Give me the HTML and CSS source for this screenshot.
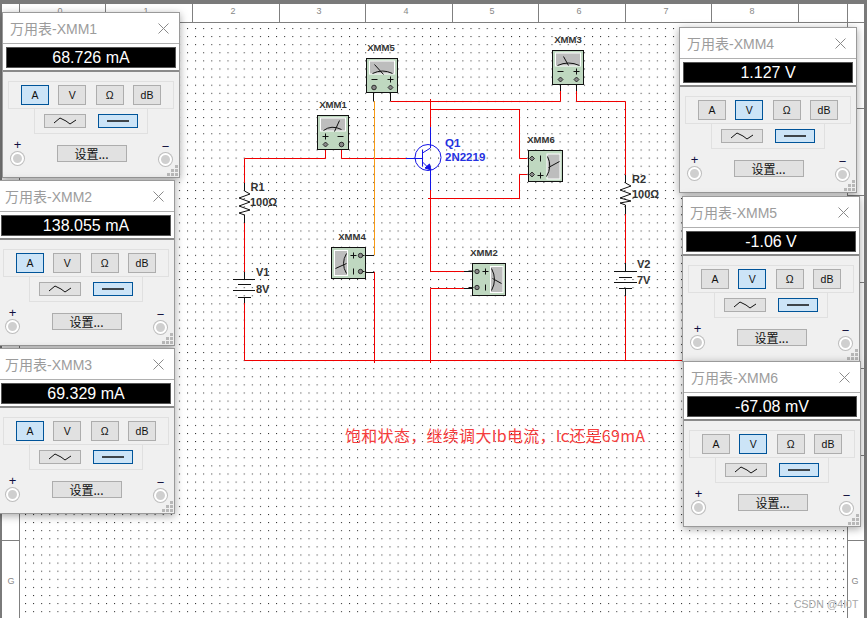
FILE: index.html
```html
<!DOCTYPE html>
<html lang="zh-CN">
<head>
<meta charset="utf-8">
<title>万用表</title>
<link rel="stylesheet" href="styles.css">
</head>
<body>
<main class="stage">
<svg class="sheet" width="867" height="618" viewBox="0 0 867 618" xmlns="http://www.w3.org/2000/svg">
  <defs>
    <pattern id="grid" patternUnits="userSpaceOnUse" x="0.7" y="3.7" width="8.1" height="8.1">
      <rect width="1" height="1" fill="#222"/>
    </pattern>
  </defs>
  <rect x="19" y="22" width="828" height="596" fill="url(#grid)"/>
  <rect x="2" y="4" width="17" height="614" fill="url(#grid)" opacity="0"/>
  <!-- ruler -->
  <g class="ruler">
    <path d="M0 22.5H867M19.5 4V618M847.5 4V618M105.5 4V22M192.5 4V22M279.5 4V22M365.5 4V22M452.5 4V22M538.5 4V22M625.5 4V22M711.5 4V22M798.5 4V22M847 108.5H867M847 195.5H867M847 282.5H867M847 368.5H867M847 455.5H867M847 540.5H867M2 540.5H19M2 455.5H19M2 368.5H19"/>
  </g>
  <rect class="edge" x="0" y="0" width="867" height="4"/>
  <rect class="edge" x="0" y="0" width="2" height="618"/>
  <rect class="edge" x="864" y="0" width="3" height="618"/>
  <text class="rulerText" x="60" y="14">0</text>
  <text class="rulerText" x="146" y="14">1</text>
  <text class="rulerText" x="233" y="14">2</text>
  <text class="rulerText" x="319" y="14">3</text>
  <text class="rulerText" x="406" y="14">4</text>
  <text class="rulerText" x="492" y="14">5</text>
  <text class="rulerText" x="579" y="14">6</text>
  <text class="rulerText" x="666" y="14">7</text>
  <text class="rulerText" x="752" y="14">8</text>
  <text class="rulerText" x="11" y="584">G</text>
  <text class="rulerText" x="855" y="584">G</text>

  <!-- red wires -->
  <path class="wRed" d="M244.5 183V158.5H325.5V148M341.5 148V158.5H406M430.5 127V101.5M390.5 101.5H560.5V91M576.5 91V101.5H625.5V175M625.5 214V263M625.5 296V360.5M244.5 360.5H682M244.5 223V272M244.5 303V360.5M430.5 109.5H519.5V158.5H527M430.5 190V271.5H464M430.5 198.5H519.5V174.5H527M430.5 288.5H464M430.5 288.5V360.5M374.5 272V360.5"/>
  <path class="wRed" d="M372 158.5H377M374.5 156V161M428 101.5H433M430.5 99V104M428 198.5H433M372 360.5H377M374.5 358V363M430.5 358V363"/>
  <path class="wOrange" d="M374.5 101V255"/>
  <!-- black leads -->
  <path class="wBlack" d="M373.5 91V101M390.5 91V101M325.5 148V140M341.5 148V140M560.5 85V91M576.5 85V91M366 255.5H374M366 272.5H374M464 271.5H472M464 288.5H472M244.5 183V191M244.5 215V223M625.5 175V183M625.5 205V214M244.5 272V279M244.5 297V303M625.5 263V271M625.5 288V296"/>
  <!-- resistors and batteries -->
  <path class="comp" d="M244.5 191L250 194 239 198 250 202 239 206 250 210 239 213 244.5 215"/>
  <path class="comp" d="M625.5 183L631 186 620 190 631 194 620 198 631 201 620 203 625.5 205"/>
  <path class="comp" d="M233 279.5H255M238 284.5H251M233 290.5H255M238 297.5H251"/>
  <path class="comp" d="M614 271.5H637M619 277.5H632M614 282.5H637M619 288.5H632"/>
  <text class="lbl" x="250.500" y="191">R1</text>
  <text class="lbl" x="250" y="206">100Ω</text>
  <text class="lbl" x="632" y="183">R2</text>
  <text class="lbl" x="632" y="198">100Ω</text>
  <text class="lbl" x="256" y="276">V1</text>
  <text class="lbl" x="256" y="293">8V</text>
  <text class="lbl" x="637" y="268">V2</text>
  <text class="lbl" x="637" y="284">7V</text>

  <!-- transistor -->
  <g class="bjt">
    <circle cx="428" cy="157.500" r="13"/>
    <path d="M430.500 127V148L422.500 153M422.500 150V166M406 158.500H422.500M422.500 162L430.500 170V190"/>
    <path class="bjtFill" d="M425 168L431 170 429.500 164Z"/>
  </g>
  <text class="qlbl" x="445" y="147">Q1</text>
  <text class="qlbl" x="445" y="161">2N2219</text>

  <!-- meters, horizontal -->
  <g transform="translate(317.500 115.500)">
    <rect class="mBody" width="31" height="34"/><rect class="mScr" x="3" y="2.500" width="25" height="13"/>
    <path class="mInk" d="M6 15Q14 9 24 14M17 16L22 5M5 21H11M8 18V24M20 21H26"/>
    <path class="pin" d="M8 26.500L10.500 29 8 31.500 5.500 29Z"/><circle class="pin" cx="24" cy="29" r="2.300"/>
  </g>
  <text class="mlbl" x="333" y="108">XMM1</text>
  <g transform="translate(366.500 58.500)">
    <rect class="mBody" width="31" height="34"/><rect class="mScr" x="3" y="2.500" width="25" height="13"/>
    <path class="mInk" d="M6 15Q16 10 26 15M8 6L17 16M5 21H11M21 21H27M24 18V24"/>
    <circle class="pin" cx="7.500" cy="29" r="2.300"/><path class="pin" d="M24 26.500L26.500 29 24 31.500 21.500 29Z"/>
  </g>
  <text class="mlbl" x="381" y="51">XMM5</text>
  <g transform="translate(552.500 50.500)">
    <rect class="mBody" width="31" height="34"/><rect class="mScr" x="3" y="2.500" width="25" height="13"/>
    <path class="mInk" d="M5 15Q16 10 27 15M11 6L16 15M5 21H11M21 21H27M24 18V24"/>
    <path class="pin" d="M8 26.500L10.500 29 8 31.500 5.500 29Z"/><path class="pin" d="M24 26.500L26.500 29 24 31.500 21.500 29Z"/>
  </g>
  <text class="mlbl" x="568" y="43">XMM3</text>
  <!-- meters, vertical -->
  <g transform="translate(528.500 150.500)">
    <rect class="mBody" width="34" height="31"/><rect class="mScr" x="18.500" y="3.500" width="13" height="25"/>
    <path class="mInk" d="M19 6Q24 16 18 26M20 17L31 11M12 5V11M9 25H15M12 22V28"/>
    <path class="pin" d="M1 8L3.500 5.500 6 8 3.500 10.500Z"/><path class="pin" d="M1 24L3.500 21.500 6 24 3.500 26.500Z"/>
  </g>
  <text class="mlbl" x="541" y="143">XMM6</text>
  <g transform="translate(472.500 263.500)">
    <rect class="mBody" width="33" height="32"/><rect class="mScr" x="18" y="3" width="12.500" height="26"/>
    <path class="mInk" d="M19 5Q25 16 19 27M20 15L29 20M10 8H16M13 5V11M13 21V27M-4 7.500H1M-4 24H1"/>
    <circle class="pin" cx="4.500" cy="8" r="2.200"/><circle class="pin" cx="4.500" cy="24" r="2.200"/>
  </g>
  <text class="mlbl" x="484" y="256">XMM2</text>
  <g transform="translate(331.500 247.500)">
    <rect class="mBody" width="34" height="31"/><rect class="mScr" x="3" y="3" width="13" height="25"/>
    <path class="mInk" d="M15 6Q9 16 15 26M4 21L15 16M19 8H25M22 5V11M22 21V27M33 8H29M33 24H29"/>
    <circle class="pin" cx="29" cy="8" r="2.200"/><circle class="pin" cx="29" cy="24" r="2.200"/>
  </g>
  <text class="mlbl" x="352" y="240">XMM4</text>

  <text class="note" x="345" y="442">饱和状态，继续调大Ib电流，Ic还是69mA</text>
  <text class="mark" x="794" y="608">CSDN @4I0T</text>
</svg>

<section class="win win1">
  <header class="tbar"><span>万用表-XMM1</span><svg class="close" width="11" height="11" viewBox="0 0 11 11"><path d="M.5.500L10.500 10.500M10.500.500L.500 10.500"/></svg></header>
  <div class="lcd"><output>68.726 mA</output></div>
  <div class="body">
    <div class="grp modes"><button class="btn on">A</button><button class="btn">V</button><button class="btn">Ω</button><button class="btn">dB</button></div>
    <div class="grp waves"><button class="btn wave"><svg width="22" height="8" viewBox="0 0 22 8"><path d="M0 6L6 1 12 4 16 7 22 3"/></svg></button><button class="btn wave dc on"><svg width="22" height="4" viewBox="0 0 22 4"><path d="M0 2H22"/></svg></button></div>
    <div class="foot">
      <div class="term"><i class="sign">+</i><b class="jack"></b></div>
      <button class="btn set">设置...</button>
      <div class="term minus"><i class="sign">−</i><b class="jack"></b></div>
    </div>
  </div>
  <svg class="grip" width="12" height="12" viewBox="0 0 12 12"><path d="M8 0h3v3H8zM4 4h3v3H4zM8 4h3v3H8zM0 8h3v3H0zM4 8h3v3H4zM8 8h3v3H8z"/></svg>
</section>

<section class="win win2">
  <header class="tbar"><span>万用表-XMM2</span><svg class="close" width="11" height="11" viewBox="0 0 11 11"><path d="M.5.500L10.500 10.500M10.500.500L.500 10.500"/></svg></header>
  <div class="lcd"><output>138.055 mA</output></div>
  <div class="body">
    <div class="grp modes"><button class="btn on">A</button><button class="btn">V</button><button class="btn">Ω</button><button class="btn">dB</button></div>
    <div class="grp waves"><button class="btn wave"><svg width="22" height="8" viewBox="0 0 22 8"><path d="M0 6L6 1 12 4 16 7 22 3"/></svg></button><button class="btn wave dc on"><svg width="22" height="4" viewBox="0 0 22 4"><path d="M0 2H22"/></svg></button></div>
    <div class="foot">
      <div class="term"><i class="sign">+</i><b class="jack"></b></div>
      <button class="btn set">设置...</button>
      <div class="term minus"><i class="sign">−</i><b class="jack"></b></div>
    </div>
  </div>
  <svg class="grip" width="12" height="12" viewBox="0 0 12 12"><path d="M8 0h3v3H8zM4 4h3v3H4zM8 4h3v3H8zM0 8h3v3H0zM4 8h3v3H4zM8 8h3v3H8z"/></svg>
</section>

<section class="win win3">
  <header class="tbar"><span>万用表-XMM3</span><svg class="close" width="11" height="11" viewBox="0 0 11 11"><path d="M.5.500L10.500 10.500M10.500.500L.500 10.500"/></svg></header>
  <div class="lcd"><output>69.329 mA</output></div>
  <div class="body">
    <div class="grp modes"><button class="btn on">A</button><button class="btn">V</button><button class="btn">Ω</button><button class="btn">dB</button></div>
    <div class="grp waves"><button class="btn wave"><svg width="22" height="8" viewBox="0 0 22 8"><path d="M0 6L6 1 12 4 16 7 22 3"/></svg></button><button class="btn wave dc on"><svg width="22" height="4" viewBox="0 0 22 4"><path d="M0 2H22"/></svg></button></div>
    <div class="foot">
      <div class="term"><i class="sign">+</i><b class="jack"></b></div>
      <button class="btn set">设置...</button>
      <div class="term minus"><i class="sign">−</i><b class="jack"></b></div>
    </div>
  </div>
  <svg class="grip" width="12" height="12" viewBox="0 0 12 12"><path d="M8 0h3v3H8zM4 4h3v3H4zM8 4h3v3H8zM0 8h3v3H0zM4 8h3v3H4zM8 8h3v3H8z"/></svg>
</section>

<section class="win win4">
  <header class="tbar"><span>万用表-XMM4</span><svg class="close" width="11" height="11" viewBox="0 0 11 11"><path d="M.5.500L10.500 10.500M10.500.500L.500 10.500"/></svg></header>
  <div class="lcd"><output>1.127 V</output></div>
  <div class="body">
    <div class="grp modes"><button class="btn">A</button><button class="btn on">V</button><button class="btn">Ω</button><button class="btn">dB</button></div>
    <div class="grp waves"><button class="btn wave"><svg width="22" height="8" viewBox="0 0 22 8"><path d="M0 6L6 1 12 4 16 7 22 3"/></svg></button><button class="btn wave dc on"><svg width="22" height="4" viewBox="0 0 22 4"><path d="M0 2H22"/></svg></button></div>
    <div class="foot">
      <div class="term"><i class="sign">+</i><b class="jack"></b></div>
      <button class="btn set">设置...</button>
      <div class="term minus"><i class="sign">−</i><b class="jack"></b></div>
    </div>
  </div>
  <svg class="grip" width="12" height="12" viewBox="0 0 12 12"><path d="M8 0h3v3H8zM4 4h3v3H4zM8 4h3v3H8zM0 8h3v3H0zM4 8h3v3H4zM8 8h3v3H8z"/></svg>
</section>

<section class="win win5">
  <header class="tbar"><span>万用表-XMM5</span><svg class="close" width="11" height="11" viewBox="0 0 11 11"><path d="M.5.500L10.500 10.500M10.500.500L.500 10.500"/></svg></header>
  <div class="lcd"><output>-1.06 V</output></div>
  <div class="body">
    <div class="grp modes"><button class="btn">A</button><button class="btn on">V</button><button class="btn">Ω</button><button class="btn">dB</button></div>
    <div class="grp waves"><button class="btn wave"><svg width="22" height="8" viewBox="0 0 22 8"><path d="M0 6L6 1 12 4 16 7 22 3"/></svg></button><button class="btn wave dc on"><svg width="22" height="4" viewBox="0 0 22 4"><path d="M0 2H22"/></svg></button></div>
    <div class="foot">
      <div class="term"><i class="sign">+</i><b class="jack"></b></div>
      <button class="btn set">设置...</button>
      <div class="term minus"><i class="sign">−</i><b class="jack"></b></div>
    </div>
  </div>
  <svg class="grip" width="12" height="12" viewBox="0 0 12 12"><path d="M8 0h3v3H8zM4 4h3v3H4zM8 4h3v3H8zM0 8h3v3H0zM4 8h3v3H4zM8 8h3v3H8z"/></svg>
</section>

<section class="win win6">
  <header class="tbar"><span>万用表-XMM6</span><svg class="close" width="11" height="11" viewBox="0 0 11 11"><path d="M.5.500L10.500 10.500M10.500.500L.500 10.500"/></svg></header>
  <div class="lcd"><output>-67.08 mV</output></div>
  <div class="body">
    <div class="grp modes"><button class="btn">A</button><button class="btn on">V</button><button class="btn">Ω</button><button class="btn">dB</button></div>
    <div class="grp waves"><button class="btn wave"><svg width="22" height="8" viewBox="0 0 22 8"><path d="M0 6L6 1 12 4 16 7 22 3"/></svg></button><button class="btn wave dc on"><svg width="22" height="4" viewBox="0 0 22 4"><path d="M0 2H22"/></svg></button></div>
    <div class="foot">
      <div class="term"><i class="sign">+</i><b class="jack"></b></div>
      <button class="btn set">设置...</button>
      <div class="term minus"><i class="sign">−</i><b class="jack"></b></div>
    </div>
  </div>
  <svg class="grip" width="12" height="12" viewBox="0 0 12 12"><path d="M8 0h3v3H8zM4 4h3v3H4zM8 4h3v3H8zM0 8h3v3H0zM4 8h3v3H4zM8 8h3v3H8z"/></svg>
</section>
</main>
</body>
</html>
```

FILE: styles.css
```css
* { box-sizing: border-box; }
html, body { margin: 0; padding: 0; background: #fff; }
body { width: 867px; height: 618px; overflow: hidden; font-family: "Liberation Sans", "Noto Sans CJK SC", sans-serif; }
.stage { position: relative; width: 867px; height: 618px; overflow: hidden; background: #fff; }
.sheet { display: block; }

.ruler path { fill: none; stroke: #808080; stroke-width: 1; }
.edge { fill: #7a7a7a; }
.rulerText { font: 9px "Liberation Sans", sans-serif; fill: #888; text-anchor: middle; }

.wRed, .wOrange, .wBlack, .comp { fill: none; stroke-width: 1; }
.wRed { stroke: #f00000; }
.wOrange { stroke: #f79a14; }
.wBlack, .comp { stroke: #111; }
.lbl { font: 700 11px "Liberation Sans", sans-serif; fill: #333; }
.bjt circle, .bjt path { fill: none; stroke: #1414e6; stroke-width: 1; }
.bjt .bjtFill { fill: #1414e6; }
.qlbl { font: 700 11.5px "Liberation Sans", sans-serif; fill: #2430e0; }
.mBody { fill: #bfd8c0; stroke: #111; stroke-width: 1; }
.mScr { fill: #bdbdbd; stroke: #fff; stroke-width: 1; }
.mInk { fill: none; stroke: #111; stroke-width: 1; }
.pin { fill: #888; stroke: #111; stroke-width: .8; }
.mlbl { font: 700 9.5px "Liberation Sans", sans-serif; fill: #333; text-anchor: middle; }
.note { font: 16px "Noto Sans CJK SC", "Liberation Sans", sans-serif; fill: #f53c3c; letter-spacing: .3px; }
.mark { font: 10.500px "Liberation Sans", sans-serif; fill: #a8a8a8; }

.win { position: absolute; width: 178px; height: 166px; display: flex; flex-direction: column; background: #f0f0f0; border: 1px solid #9a9a9a; box-shadow: 0 2px 8px rgba(0, 0, 0, .35); }
.win1 { left: 2px; top: 12px; }
.win2 { left: -3px; top: 180px; }
.win3 { left: -3px; top: 348px; }
.win4 { left: 679px; top: 27px; }
.win5 { left: 682px; top: 196px; }
.win6 { left: 683px; top: 361px; }

.tbar { height: 30px; flex: none; display: flex; align-items: center; justify-content: space-between; padding: 0 10px 0 7px; background: #fff; color: #9c9c9c; font-size: 14px; }
.close path { fill: none; stroke: #8a8a8a; stroke-width: 1; }

.lcd { height: 29px; flex: none; padding: 3px 3px 2px 3px; background: #fff; border-top: 1px solid #b0b0b0; border-bottom: 2px solid #8a8a8a; }
.lcd output { display: flex; align-items: center; justify-content: center; height: 100%; background: #000; color: #fff; font-size: 16px; border: 1px solid #555; }

.body { flex: 1; position: relative; display: flex; flex-direction: column; align-items: center; padding-top: 9px; }
.grp { display: flex; align-items: flex-start; border: 1px solid #e0e0e0; }
.modes { width: 166px; height: 28px; padding: 3px 12px 0; justify-content: space-between; }
.waves { width: 114px; height: 25px; padding: 5px 9px 0; justify-content: space-between; border-top: 0; }

.btn { display: flex; align-items: center; justify-content: center; width: 28px; height: 20px; padding: 0; margin: 0; background: #e1e1e1; border: 1px solid #adadad; border-radius: 0; color: #111; font: 10.500px "Liberation Sans", sans-serif; }
.btn.on { background: #cce4f7; border: 1px solid #005499; }
.wave { width: 42px; height: 14px; }
.wave.dc { width: 40px; }
.wave svg { display: block; }
.wave path { fill: none; stroke: #111; stroke-width: 1; }
.wave.dc path { stroke-width: 1.500; }

.foot { width: 100%; display: flex; justify-content: space-between; align-items: flex-start; padding: 0 7px 0 8px; flex: 1; }
.set { width: 70px; height: 17px; margin-top: 11px; font: 12px "Noto Sans CJK SC", "Liberation Sans", sans-serif; }
.term { width: 13px; display: flex; flex-direction: column; align-items: center; margin-top: 5px; }
.term.minus { margin-top: 8px; }
.sign { height: 13px; font: 13px/12px "Liberation Sans", sans-serif; color: #101040; }
.term.minus .sign { height: 11px; line-height: 10px; }
.jack { width: 13px; height: 13px; border-radius: 50%; background: #cfcfcf; border: 2px solid #fff; box-shadow: 0 0 0 1px #bdbdbd; }

.grip { position: absolute; right: 0; bottom: 0; }
.grip path { fill: #b8b8b8; }
```
